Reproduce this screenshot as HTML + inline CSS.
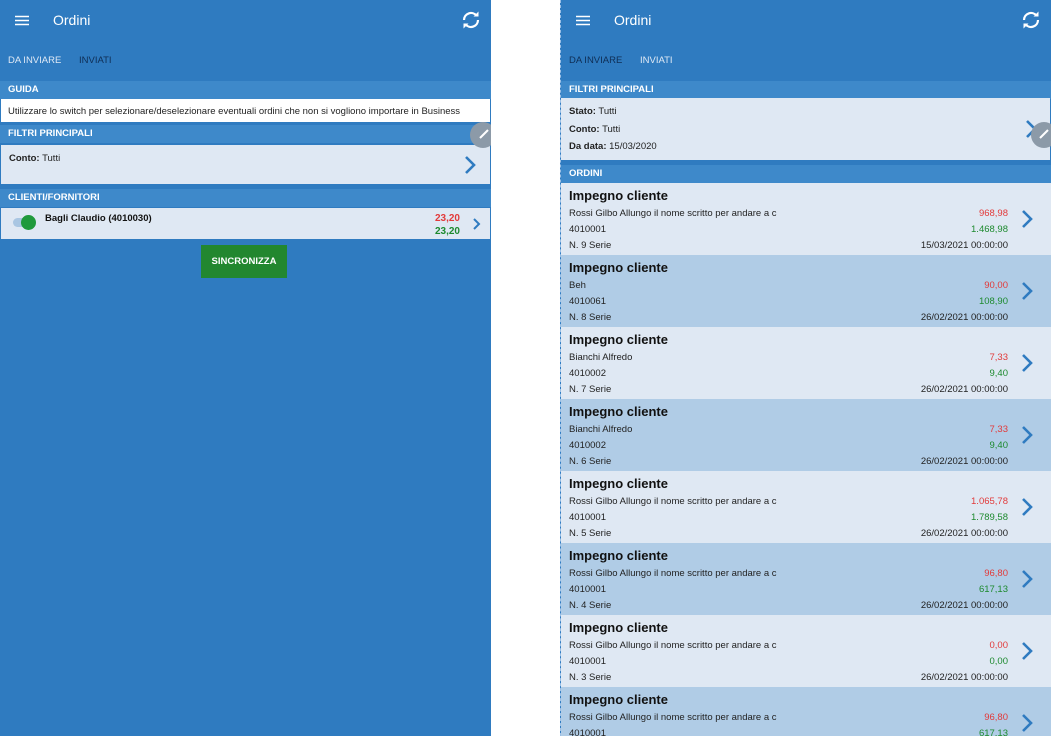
<!DOCTYPE html>
<html><head><meta charset="utf-8"><style>
*{margin:0;padding:0;box-sizing:border-box}
html,body{width:1051px;height:736px;overflow:hidden}
body{background:#fff;position:relative;font-family:"Liberation Sans",sans-serif}
.p{position:absolute;top:0;height:736px;width:491px;background:#2f7bc0;overflow:hidden}
.a{position:absolute}
.hdr{color:#fff;font-size:14px}
.tab{font-size:9.5px;top:55px}
.sec{position:absolute;left:0;right:0;height:18px;background:#3e89ca;color:#fff;font-weight:bold;font-size:9.5px;padding:3px 0 0 8px}
.box{position:absolute;left:1px;right:1px;background:#dfe8f3}
.row{position:absolute;left:0;width:491px;height:72px;font-size:9.5px;color:#222;white-space:nowrap}
.row .t{position:absolute;left:8px;top:5px;font-size:13px;font-weight:bold;color:#111}
.row .l{position:absolute;left:8px}
.row .r{position:absolute;right:44px;text-align:right}
.chev{position:absolute}
</style></head><body>
<div class="p" style="left:0">
 <svg class="a" style="left:15px;top:15px" width="14" height="11"><path d="M0 1.5H14M0 5.5H14M0 9.5H14" stroke="#fff" stroke-width="1.6"/></svg>
 <div class="a hdr" style="left:53px;top:12px">Ordini</div>
 <svg class="a" style="left:461px;top:11px" width="20" height="18" viewBox="0 0 20 18"><path d="M3 9a7 7 0 0 1 12.5-4.3M17 9a7 7 0 0 1-12.5 4.3" fill="none" stroke="#fff" stroke-width="2.2"/><path d="M12.5 5.5l5 0 0-5z M7.5 12.5l-5 0 0 5z" fill="#fff"/></svg>
 <div class="a tab" style="left:8px;color:#dfe9f5">DA INVIARE</div>
 <div class="a tab" style="left:79px;color:#0f2e55">INVIATI</div>
 <div class="sec" style="top:81px">GUIDA</div>
 <div class="box" style="top:99px;height:23px;background:#fff;font-size:9.5px;padding:7px 0 0 7px;color:#222">Utilizzare lo switch per selezionare/deselezionare eventuali ordini che non si vogliono importare in Business</div>
 <div class="sec" style="top:125px">FILTRI PRINCIPALI</div>
 <div class="box" style="top:145px;height:39px;font-size:9.5px;padding:8px 0 0 8px;color:#222"><b>Conto:</b> Tutti</div>
 <svg class="a" style="left:463px;top:155px" width="14" height="20"><path d="M3 2l8 8-8 8" fill="none" stroke="#2f7bc0" stroke-width="2.6"/></svg>
 <div class="a" style="left:470px;top:122px;width:26px;height:26px;border-radius:50%;background:#8c9aa8"></div>
 <svg class="a" style="left:477px;top:127px" width="14" height="14"><path d="M3 11L11 3" stroke="#fff" stroke-width="2"/></svg>
 <div class="sec" style="top:189px">CLIENTI/FORNITORI</div>
 <div class="box" style="top:208px;height:31px"></div>
 <div class="a" style="left:13px;top:218px;width:20px;height:9px;border-radius:5px;background:#a9c6e2"></div>
 <div class="a" style="left:21px;top:215px;width:15px;height:15px;border-radius:50%;background:#1f9a3c"></div>
 <div class="a" style="left:45px;top:213px;font-size:9.5px;font-weight:bold;color:#111">Bagli Claudio (4010030)</div>
 <div class="a" style="right:31px;top:213px;font-size:10px;font-weight:bold;color:#e23a3a">23,20</div>
 <div class="a" style="right:31px;top:226px;font-size:10px;font-weight:bold;color:#1d8a2e">23,20</div>
 <svg class="a" style="left:472px;top:217px" width="10" height="14"><path d="M2 2l5 5-5 5" fill="none" stroke="#2f7bc0" stroke-width="2"/></svg>
 <div class="a" style="left:201px;top:245px;width:86px;height:33px;background:#22872f;color:#fff;font-weight:bold;font-size:9.5px;text-align:center;line-height:33px">SINCRONIZZA</div>
</div>

<div class="p" style="left:560px;border-left:1px dashed #9cc0e6">
 <svg class="a" style="left:15px;top:15px" width="14" height="11"><path d="M0 1.5H14M0 5.5H14M0 9.5H14" stroke="#fff" stroke-width="1.6"/></svg>
 <div class="a hdr" style="left:53px;top:12px">Ordini</div>
 <svg class="a" style="left:460px;top:11px" width="20" height="18" viewBox="0 0 20 18"><path d="M3 9a7 7 0 0 1 12.5-4.3M17 9a7 7 0 0 1-12.5 4.3" fill="none" stroke="#fff" stroke-width="2.2"/><path d="M12.5 5.5l5 0 0-5z M7.5 12.5l-5 0 0 5z" fill="#fff"/></svg>
 <div class="a tab" style="left:8px;color:#0f2e55">DA INVIARE</div>
 <div class="a tab" style="left:79px;color:#dfe9f5">INVIATI</div>
 <div class="sec" style="top:81px">FILTRI PRINCIPALI</div>
 <div class="box" style="top:98px;height:62px;left:0;font-size:9.5px;color:#222;line-height:17.5px;padding:5px 0 0 8px"><b>Stato:</b> Tutti<br><b>Conto:</b> Tutti<br><b>Da data:</b> 15/03/2020</div>
 <svg class="a" style="left:463px;top:119px" width="14" height="20"><path d="M3 2l8 8-8 8" fill="none" stroke="#2f7bc0" stroke-width="2.6"/></svg>
 <div class="a" style="left:470px;top:122px;width:26px;height:26px;border-radius:50%;background:#8c9aa8"></div>
 <svg class="a" style="left:476px;top:127px" width="14" height="14"><path d="M3 11L11 3" stroke="#fff" stroke-width="2"/></svg>
 <div class="sec" style="top:165px">ORDINI</div>
 <div class="row" style="top:183px;background:#dfe8f3"><div class="t">Impegno cliente</div><div class="l" style="top:25px">Rossi Gilbo Allungo il nome scritto per andare a c</div><div class="l" style="top:41px">4010001</div><div class="l" style="top:57px">N. 9 Serie</div><div class="r" style="top:25px;color:#e23a3a">968,98</div><div class="r" style="top:41px;color:#1d8a2e">1.468,98</div><div class="r" style="top:57px">15/03/2021 00:00:00</div><svg class="chev" style="left:459px;top:26px" width="14" height="20"><path d="M3 2l8 8-8 8" fill="none" stroke="#2f7bc0" stroke-width="2.6"/></svg></div>
 <div class="row" style="top:255px;background:#b0cce6"><div class="t">Impegno cliente</div><div class="l" style="top:25px">Beh</div><div class="l" style="top:41px">4010061</div><div class="l" style="top:57px">N. 8 Serie</div><div class="r" style="top:25px;color:#e23a3a">90,00</div><div class="r" style="top:41px;color:#1d8a2e">108,90</div><div class="r" style="top:57px">26/02/2021 00:00:00</div><svg class="chev" style="left:459px;top:26px" width="14" height="20"><path d="M3 2l8 8-8 8" fill="none" stroke="#2f7bc0" stroke-width="2.6"/></svg></div>
 <div class="row" style="top:327px;background:#dfe8f3"><div class="t">Impegno cliente</div><div class="l" style="top:25px">Bianchi Alfredo</div><div class="l" style="top:41px">4010002</div><div class="l" style="top:57px">N. 7 Serie</div><div class="r" style="top:25px;color:#e23a3a">7,33</div><div class="r" style="top:41px;color:#1d8a2e">9,40</div><div class="r" style="top:57px">26/02/2021 00:00:00</div><svg class="chev" style="left:459px;top:26px" width="14" height="20"><path d="M3 2l8 8-8 8" fill="none" stroke="#2f7bc0" stroke-width="2.6"/></svg></div>
 <div class="row" style="top:399px;background:#b0cce6"><div class="t">Impegno cliente</div><div class="l" style="top:25px">Bianchi Alfredo</div><div class="l" style="top:41px">4010002</div><div class="l" style="top:57px">N. 6 Serie</div><div class="r" style="top:25px;color:#e23a3a">7,33</div><div class="r" style="top:41px;color:#1d8a2e">9,40</div><div class="r" style="top:57px">26/02/2021 00:00:00</div><svg class="chev" style="left:459px;top:26px" width="14" height="20"><path d="M3 2l8 8-8 8" fill="none" stroke="#2f7bc0" stroke-width="2.6"/></svg></div>
 <div class="row" style="top:471px;background:#dfe8f3"><div class="t">Impegno cliente</div><div class="l" style="top:25px">Rossi Gilbo Allungo il nome scritto per andare a c</div><div class="l" style="top:41px">4010001</div><div class="l" style="top:57px">N. 5 Serie</div><div class="r" style="top:25px;color:#e23a3a">1.065,78</div><div class="r" style="top:41px;color:#1d8a2e">1.789,58</div><div class="r" style="top:57px">26/02/2021 00:00:00</div><svg class="chev" style="left:459px;top:26px" width="14" height="20"><path d="M3 2l8 8-8 8" fill="none" stroke="#2f7bc0" stroke-width="2.6"/></svg></div>
 <div class="row" style="top:543px;background:#b0cce6"><div class="t">Impegno cliente</div><div class="l" style="top:25px">Rossi Gilbo Allungo il nome scritto per andare a c</div><div class="l" style="top:41px">4010001</div><div class="l" style="top:57px">N. 4 Serie</div><div class="r" style="top:25px;color:#e23a3a">96,80</div><div class="r" style="top:41px;color:#1d8a2e">617,13</div><div class="r" style="top:57px">26/02/2021 00:00:00</div><svg class="chev" style="left:459px;top:26px" width="14" height="20"><path d="M3 2l8 8-8 8" fill="none" stroke="#2f7bc0" stroke-width="2.6"/></svg></div>
 <div class="row" style="top:615px;background:#dfe8f3"><div class="t">Impegno cliente</div><div class="l" style="top:25px">Rossi Gilbo Allungo il nome scritto per andare a c</div><div class="l" style="top:41px">4010001</div><div class="l" style="top:57px">N. 3 Serie</div><div class="r" style="top:25px;color:#e23a3a">0,00</div><div class="r" style="top:41px;color:#1d8a2e">0,00</div><div class="r" style="top:57px">26/02/2021 00:00:00</div><svg class="chev" style="left:459px;top:26px" width="14" height="20"><path d="M3 2l8 8-8 8" fill="none" stroke="#2f7bc0" stroke-width="2.6"/></svg></div>
 <div class="row" style="top:687px;background:#b0cce6"><div class="t">Impegno cliente</div><div class="l" style="top:25px">Rossi Gilbo Allungo il nome scritto per andare a c</div><div class="l" style="top:41px">4010001</div><div class="r" style="top:25px;color:#e23a3a">96,80</div><div class="r" style="top:41px;color:#1d8a2e">617,13</div><svg class="chev" style="left:459px;top:26px" width="14" height="20"><path d="M3 2l8 8-8 8" fill="none" stroke="#2f7bc0" stroke-width="2.6"/></svg></div>
</div>
</body></html>
